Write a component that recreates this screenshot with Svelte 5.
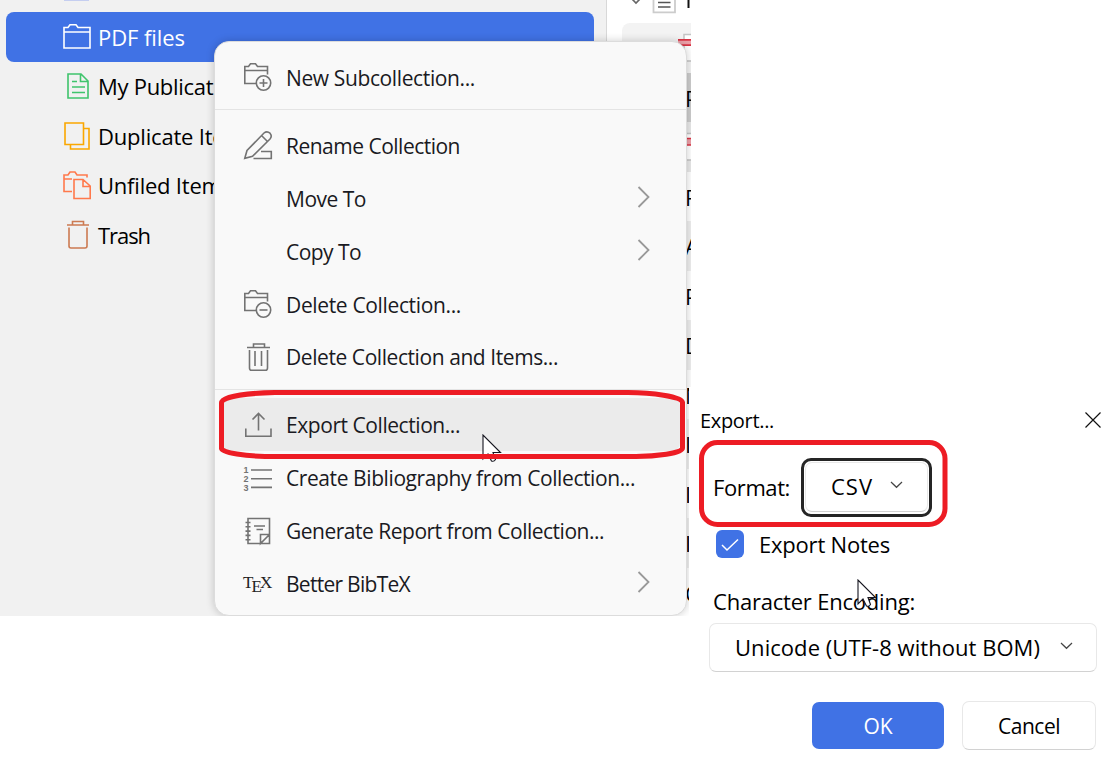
<script>
  const collections = [
    { icon: 'folder', label: 'PDF files', width: 87, selected: true },
    { icon: 'document', label: 'My Publications', width: 157 },
    { icon: 'duplicate', label: 'Duplicate Items', width: 157 },
    { icon: 'unfiled', label: 'Unfiled Items', width: 134 },
    { icon: 'trash', label: 'Trash', width: 52 }
  ];

  const groups = [
    [{ icon: 'folder-plus', label: 'New Subcollection...', width: 189 }],
    [
      { icon: 'rename', label: 'Rename Collection', width: 174 },
      { label: 'Move To', width: 80, submenu: true },
      { label: 'Copy To', width: 75, submenu: true },
      { icon: 'folder-minus', label: 'Delete Collection...', width: 175 },
      { icon: 'bin', label: 'Delete Collection and Items...', width: 272 }
    ],
    [
      { icon: 'export', label: 'Export Collection...', width: 174, active: true },
      { icon: 'numbered', label: 'Create Bibliography from Collection...', width: 349 },
      { icon: 'report', label: 'Generate Report from Collection...', width: 318 },
      { icon: 'tex', label: 'Better BibTeX', width: 124, submenu: true }
    ]
  ];

  const entries = ['R', 'A', 'P', 'D', 'N', 'I', 'I', 'I', 'C'];

  // Tracks the label so that it takes up the given width.
  function fit(node, width) {
    const natural = node.getBoundingClientRect().width;
    node.style.letterSpacing = `${(width - natural) / node.textContent.length}px`;
  }
</script>

{#snippet label(text, width)}
  <span class="label" use:fit={width}>{text}</span>
{/snippet}

{#snippet chevronDown()}
  <svg class="down" width="13" height="8" viewBox="0 0 13 8"><path d="M1 1l5.500 5.300L12 1" /></svg>
{/snippet}

{#snippet cursor()}
  <svg width="20" height="29" viewBox="-1 -1 20 29">
    <path d="M0 0V24L5 19L8.500 26Q11 27 12.500 24.500L10 17.500H17.500Z" fill="#fff" stroke="#15151f" stroke-width="1.100" />
  </svg>
{/snippet}

{#snippet glyph(name)}
  <svg class="glyph" width="28" height="28" viewBox="0 0 28 28">
    {#if name === 'folder'}
      <g stroke="#fff"><path d="M1 3.500H5L7 .8H13L15 3.500H27V24H1ZM1 8H27" /></g>
    {:else if name === 'document'}
      <g stroke="#3fc46c"><path d="M5 1H18L25 8V25H5ZM17.500 1V8.500H25M9 8.500H14M9 14H22M9 19.500H22" /></g>
    {:else if name === 'duplicate'}
      <g stroke="#faa700"><path d="M2 0H20.500V21.500H2ZM20.500 5.500H26V26H7.500V21.500" /></g>
    {:else if name === 'unfiled'}
      <g stroke="#ff794c"><path d="M9 19.500H1V3H5L7 0H12L14 3H24V5.500M1 7H9M11 7.500H20L27.200 14V26.500H11ZM20 7.500V14.500H27" /></g>
    {:else if name === 'trash'}
      <g stroke="#cc7a52"><path d="M4 3H26M9.500 3V-.5H20.500V3M6 5.500V24Q6 26 8 26H22Q24 26 24 24V5.500" /></g>
    {:else if name === 'folder-plus' || name === 'folder-minus'}
      <path d="M12 20.500H.8V3.500H4.500L6.500 .8H11.500L13.500 3.500H23.500V11.500M.8 7.500H23.500" />
      <circle cx="19.500" cy="20" r="7.200" />
      <path d={name === 'folder-plus' ? 'M15.500 20H23.500M19.500 16V24' : 'M15.500 20H23.500'} />
    {:else if name === 'rename'}
      <path d="M.8 27.300L3 19.500L20 2Q23-.4 26 2.200Q28.500 5 26 8L8.500 25.300ZM17.500 4.500L23.500 10.500M17 20.500H27.300V27.500H9.500" />
    {:else if name === 'bin'}
      <path d="M3 4.500H26M9.500 4.500V1H20.500V4.500M5.500 7V25Q5.500 27.300 7.500 27.300H21.500Q23.500 27.300 23.500 25V7M11 8V23M17.500 8V23" />
    {:else if name === 'export'}
      <path d="M1.800 17.500V25.200H27V17.500M14.500 19.500V2.500M8.500 8.500L14.500 2.500L20.500 8.500" />
    {:else if name === 'numbered'}
      <path d="M7 6H28M7 14.700H28M7 23.400H28" />
      <g class="digits"><text x="-.5" y="9">1</text><text x="-.5" y="17.700">2</text><text x="-.5" y="26.500">3</text></g>
    {:else if name === 'report'}
      <path d="M4 1.500H25.500V26.500H4ZM1.500 5.500H6.500M1.500 9.800H6.500M1.500 14.100H6.500M1.500 18.400H6.500M1.500 22.700H6.500M10 9H21M12.500 12.500H19M25.500 17.500H16.500V26.500L25.500 17.500" />
    {:else if name === 'tex'}
      <g class="tex"><text x="-1" y="19">T</text><text x="7.500" y="22.500">E</text><text x="16" y="19">X</text></g>
    {/if}
  </svg>
{/snippet}

<main>
  <section class="library">
    <aside>
      <div class="clipped-icon"></div>
      {#each collections as item}
        <div class="collection" class:selected={item.selected}>
          {@render glyph(item.icon)}
          {@render label(item.label, item.width)}
        </div>
      {/each}
    </aside>

    <div class="items">
      <div class="items-head">
        <svg width="84" height="23" viewBox="0 0 84 23">
          <path d="M25 -1L29 3L33 -1" stroke="#666" stroke-width="1.600" fill="none" />
          <path d="M46.500 -2V12.300H68V-2" stroke="#ccc" stroke-width="1.800" fill="#fff" />
          <path d="M51 2.500H63.500M51 7H63.500" stroke="#555" stroke-width="1.500" />
          <path d="M81.500 0V8" stroke="#111" stroke-width="2" />
        </svg>
      </div>
      <div class="entry first">
        <svg width="20" height="40" viewBox="0 0 20 40">
          <path d="M20 6.500H6V33H20" stroke="#c4c4c4" stroke-width="1.500" fill="#fff" />
          <path d="M0 14H20" stroke="#eca0a8" stroke-width="6" />
          <path d="M0 11.800H20M0 17.200H20" stroke="#d93445" stroke-width="1.700" />
        </svg>
      </div>
      <div class="entry current"><span>P</span></div>
      <div class="entry pdf">
        <svg width="10" height="49" viewBox="0 0 10 49">
          <rect y="11" width="10" height="27" fill="#fff" />
          <path d="M0 11.500H10M0 38H10" stroke="#c4c4c4" stroke-width="1.500" />
          <rect y="16" width="10" height="7" fill="#eca0a8" />
          <path d="M0 16.500H10M0 23H10" stroke="#d93445" stroke-width="1.500" />
        </svg>
      </div>
      {#each entries as entry}
        <div class="entry"><span>{entry}</span></div>
      {/each}
    </div>

    <nav class="menu">
      {#each groups as group}
        <div class="group">
          {#each group as item}
            <div class="item" class:active={item.active}>
              <div class="slot">{#if item.icon}{@render glyph(item.icon)}{/if}</div>
              {@render label(item.label, item.width)}
              {#if item.submenu}
                <svg class="more" width="14" height="22" viewBox="0 0 14 22"><path d="M1.500 1L11.500 11L1.500 21" /></svg>
              {/if}
            </div>
          {/each}
        </div>
      {/each}
    </nav>

    <div class="pointer menu-pointer">{@render cursor()}</div>
    <svg class="mark menu-mark" width="472" height="72" viewBox="217 388 472 72">
      <path d="M275 392.500H628C650 392.800 682.500 396 682.500 402.500V448C682.500 453.500 655 456.500 636 456.500H265C248 456 221.500 453 221.500 448.500V403C221.500 396 252 393 275 392.500Z" />
    </svg>
  </section>

  <section class="dialog">
    <header>
      <div class="title">{@render label('Export...', 74)}</div>
      <svg width="16" height="16" viewBox="0 0 16 16"><path d="M.5 .5L15.500 15.500M15.500 .5L.5 15.500" stroke="#111" stroke-width="1.200" /></svg>
    </header>
    <div class="format">
      {@render label('Format:', 77)}
      <div class="focus-ring">
        <div class="select small">{@render label('CSV', 42)}{@render chevronDown()}</div>
      </div>
      <svg class="mark format-mark" width="252" height="90" viewBox="698 439 252 90">
        <rect x="701.500" y="442.500" width="243.500" height="82" rx="16" />
      </svg>
    </div>
    <div class="notes">
      <div class="checkbox">
        <svg width="28" height="28" viewBox="0 0 28 28"><path d="M6 15L11 20L22 9.500" stroke="#fff" stroke-width="1.500" fill="none" /></svg>
      </div>
      {@render label('Export Notes', 131)}
    </div>
    <div class="encoding">
      {@render label('Character Encoding:', 202)}
      <div class="pointer dialog-pointer">{@render cursor()}</div>
    </div>
    <div class="select wide">{@render label('Unicode (UTF-8 without BOM)', 305)}{@render chevronDown()}</div>
    <footer>
      <div class="button primary">{@render label('OK', 29)}</div>
      <div class="button">{@render label('Cancel', 62)}</div>
    </footer>
  </section>
</main>

<style>
  :global(body) { margin: 0; background: #fff; }
  main {
    position: relative;
    display: grid;
    grid-template-columns: 689px 422px;
    width: 1111px;
    height: 763px;
    overflow: hidden;
    background: #fff;
    color: #000;
    font: 22px/28px "Open Sans", "Noto Sans", sans-serif;
  }
  svg { display: block; flex: none; }
  .label { display: inline-block; white-space: nowrap; }

  .library {
    position: relative;
    display: grid;
    grid-template-columns: 607px 84px;
    width: 691px;
    height: 616px;
    overflow: hidden;
  }
  aside {
    box-sizing: border-box;
    background: #f1f1f1;
    border-right: 1px solid #d8d8d8;
    padding: 0 12px 0 6px;
  }
  .clipped-icon { width: 25px; height: 1px; margin: 0 0 11px 58px; background: #c5cef0; }
  .collection {
    display: flex;
    align-items: center;
    gap: 7px;
    box-sizing: border-box;
    height: 49.500px;
    padding: 2px 0 0 57px;
    border-radius: 8px;
  }
  .collection .label { margin-top: -2px; }
  .collection.selected { background: #4072e5; color: #fff; }
  .glyph { overflow: visible; fill: none; stroke: #737373; stroke-width: 1.600; }

  .items { background: #fff; }
  .items-head { height: 23px; }
  .entry {
    display: flex;
    align-items: center;
    box-sizing: border-box;
    height: 49.500px;
    margin-left: 15px;
    padding: 1px 0 0 63px;
  }
  .entry:nth-child(even) { background: #efefef; }
  .entry.first { background: #f3f3f3; border-radius: 8px 0 0 0; padding: 0 0 0 56px; align-items: flex-start; }
  .entry.first svg { margin-top: 5px; }
  .entry.current { background: #cdcdcd; }
  .entry.pdf { background: #e9e9e9; padding-top: 0; }

  .menu {
    position: absolute;
    left: 214px;
    top: 41px;
    box-sizing: border-box;
    width: 473px;
    height: 575px;
    padding-top: 9px;
    border: 1px solid #dcdcdc;
    border-radius: 15px;
    background: #f9f9f9;
    box-shadow: 0 0 8px #0003;
    color: #1a1a22;
    font-size: 21px;
  }
  .group + .group { border-top: 1px solid #e4e4e4; margin-top: 5px; padding-top: 9px; }
  .group + .group + .group { margin-top: 6px; padding-top: 8px; }
  .item {
    display: flex;
    align-items: center;
    box-sizing: border-box;
    height: 52.900px;
    margin: 0 6px;
    padding: 0 29px 0 23px;
    border-radius: 8px;
  }
  .item .label { padding-top: 1px; }
  .item.active { background: #ebebeb; }
  .slot { width: 28px; height: 28px; margin-right: 14px; }
  .more { margin: -2px 0 0 auto; fill: none; stroke: #999; stroke-width: 1.800; }
  .digits { fill: #737373; stroke: none; font: bold 9px "Liberation Sans", sans-serif; }
  .tex { fill: #222; stroke: none; font: 17px "Liberation Serif", serif; }

  .pointer { position: absolute; }
  .menu-pointer { left: 482px; top: 434px; }
  .mark { position: absolute; fill: none; stroke: #ed1c24; stroke-width: 5; }
  .menu-mark { left: 217px; top: 388px; }

  .dialog {
    position: relative;
    height: 376px;
    margin-top: 387px;
    background: #fff;
  }
  header {
    display: flex;
    justify-content: space-between;
    align-items: center;
    height: 66px;
    padding: 0 10px 0 11px;
  }
  .title { font-size: 20px; margin-top: 2px; }
  .format {
    position: relative;
    display: flex;
    align-items: center;
    gap: 11px;
    height: 69px;
    padding-left: 24px;
  }
  .format .label, .notes .label, .wide .label { margin-top: -2px; }
  .format-mark { left: 9px; top: -14px; }
  .focus-ring {
    box-sizing: border-box;
    width: 131px;
    height: 59px;
    padding: 1px;
    border: 3px solid #252525;
    border-radius: 10px;
  }
  .select {
    box-sizing: border-box;
    display: flex;
    align-items: center;
    justify-content: space-between;
    border: 1px solid #e8e8e8;
    border-bottom-color: #d2d2d2;
    border-radius: 7px;
    background: #fff;
  }
  .small { height: 50px; padding: 0 24px 0 25px; }
  .down { fill: none; stroke: #444; stroke-width: 1.200; margin-top: -4px; }
  .notes { display: flex; align-items: center; gap: 15px; height: 46px; padding-left: 27px; }
  .checkbox { width: 28px; height: 28px; margin-top: -2px; border-radius: 6px; background: #4072e5; }
  .encoding { position: relative; height: 36px; padding: 19px 0 0 24px; }
  .dialog-pointer { left: 168px; top: 11px; }
  .wide { width: 388px; height: 49px; margin-left: 20px; padding: 0 23px 0 25px; }
  footer { display: flex; gap: 18px; margin: 29px 0 0 123px; }
  .button {
    box-sizing: border-box;
    display: flex;
    align-items: center;
    justify-content: center;
    width: 134px;
    height: 49px;
    border: 1px solid #e8e8e8;
    border-bottom-color: #d2d2d2;
    border-radius: 7px;
    font-size: 21px;
  }
  .button.primary { width: 132px; height: 47px; margin-top: 1px; border: 0; background: #4072e5; color: #fff; }
</style>
